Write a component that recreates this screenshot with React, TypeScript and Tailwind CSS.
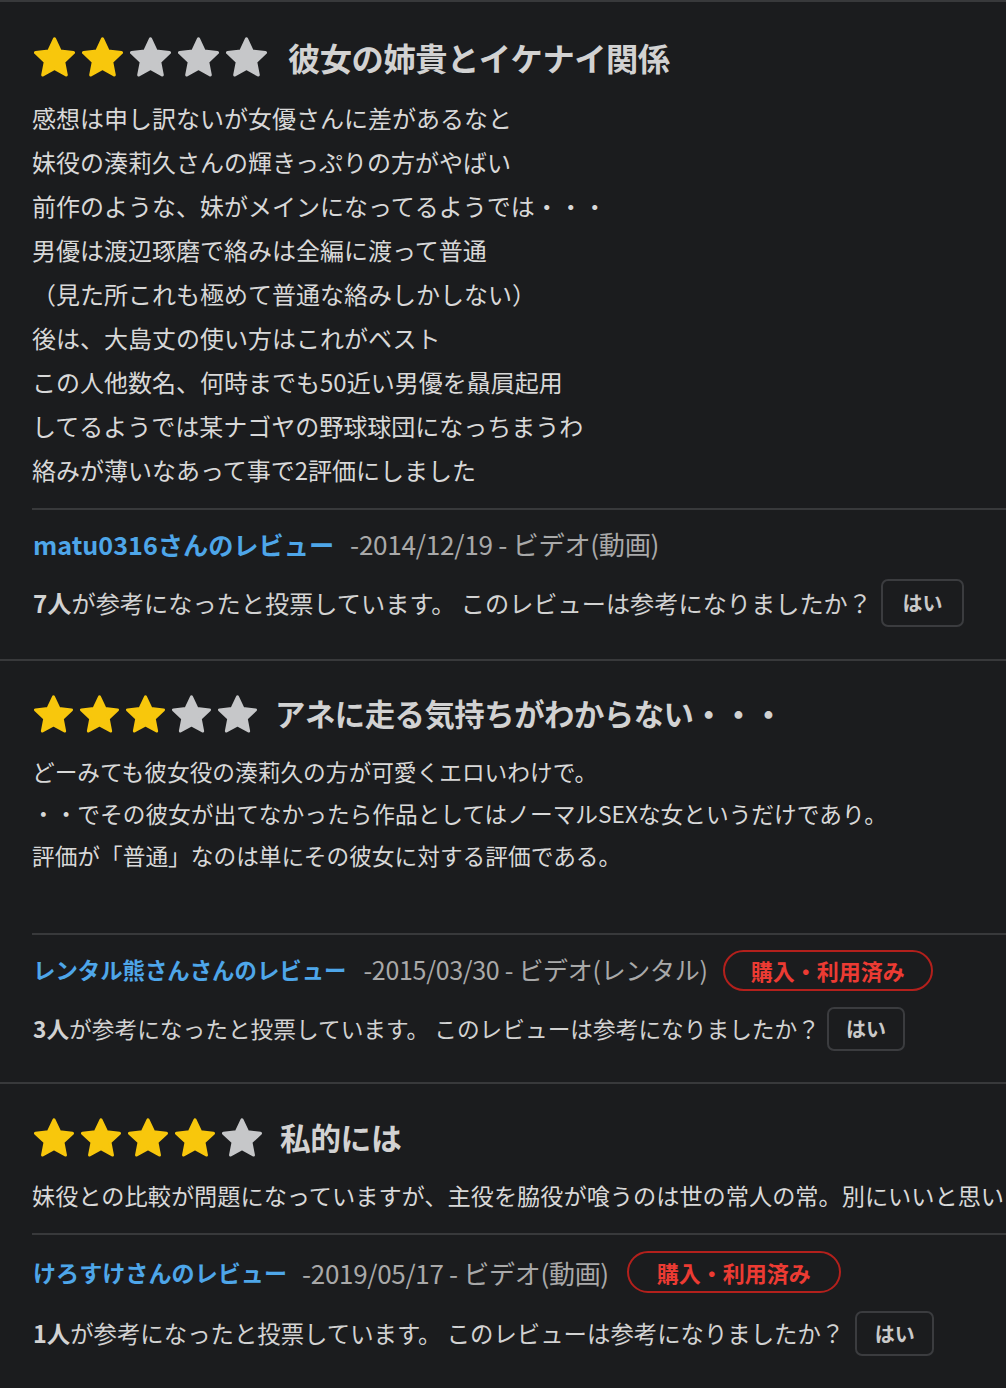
import React from 'react';

interface Sizes {
  pt: string;
  star: string;
  starGap: string;
  title: string;
  bodyMt: string;
  body: string;
  bodyMb: string;
  name: string;
  date: string;
  metaMt: string;
  metaH: string;
  badge: string;
  vote: string;
  voteMt: string;
  button: string;
  pb: string;
}

interface ReviewData {
  rating: number;
  title: string;
  lines: string[];
  reviewer: string;
  date: string;
  purchased?: boolean;
  votes: number;
  nowrap?: boolean;
  s: Sizes;
}

const Star: React.FC<{ filled: boolean; className: string }> = ({ filled, className }) => {
  const color = filled ? '#f8c70c' : '#c6c7c9';
  return (
    <svg viewBox="1.75 1.8 20.5 19.6" className={className}>
      <path
        d="M12 2.6l2.85 6.05 6.6.8-4.88 4.55 1.27 6.55L12 17.3l-5.84 3.25 1.27-6.55L2.55 9.45l6.6-.8z"
        fill={color}
        stroke={color}
        strokeWidth="1.6"
        strokeLinejoin="round"
      />
    </svg>
  );
};

const reviews: ReviewData[] = [
  {
    rating: 2,
    title: '彼女の姉貴とイケナイ関係',
    lines: [
      '感想は申し訳ないが女優さんに差があるなと',
      '妹役の湊莉久さんの輝きっぷりの方がやばい',
      '前作のような、妹がメインになってるようでは・・・',
      '男優は渡辺琢磨で絡みは全編に渡って普通',
      '（見た所これも極めて普通な絡みしかしない）',
      '後は、大島丈の使い方はこれがベスト',
      'この人他数名、何時までも50近い男優を贔屓起用',
      'してるようでは某ナゴヤの野球球団になっちまうわ',
      '絡みが薄いなあって事で2評価にしました',
    ],
    reviewer: 'matu0316さんのレビュー',
    date: '-2014/12/19 - ビデオ(動画)',
    votes: 7,
    s: {
      pt: 'pt-[31px]',
      star: 'w-[41px] h-[40px]',
      starGap: 'gap-[7px]',
      title: 'text-[32.3px] ml-[21px]',
      bodyMt: 'mt-[15px]',
      body: 'text-[24px] leading-[44px]',
      bodyMb: 'mb-[16px]',
      name: 'text-[25.2px]',
      date: 'text-[26.2px] ml-[16px]',
      metaMt: 'mt-[16px]',
      metaH: 'h-[36px]',
      badge: '',
      vote: 'text-[24.2px]',
      voteMt: 'mt-[17px]',
      button: 'w-[83px] h-[48px] ml-[9px]',
      pb: 'pb-[32px]',
    },
  },
  {
    rating: 3,
    title: 'アネに走る気持ちがわからない・・・',
    lines: [
      'どーみても彼女役の湊莉久の方が可愛くエロいわけで。',
      '・・でその彼女が出てなかったら作品としてはノーマルSEXな女というだけであり。',
      '評価が「普通」なのは単にその彼女に対する評価である。',
    ],
    reviewer: 'レンタル熊さんさんのレビュー',
    date: '-2015/03/30 - ビデオ(レンタル)',
    purchased: true,
    votes: 3,
    s: {
      pt: 'pt-[30px]',
      star: 'w-[39px] h-[38px]',
      starGap: 'gap-[7px]',
      title: 'text-[30.4px] ml-[18px]',
      bodyMt: 'mt-[14px]',
      body: 'text-[22.7px] leading-[42px]',
      bodyMb: 'mb-[56px]',
      name: 'text-[22.4px]',
      date: 'text-[25px] ml-[17px]',
      metaMt: 'mt-[14px]',
      metaH: 'h-[42px]',
      badge: 'h-[41px] px-[26px] text-[22px] ml-[15px]',
      vote: 'text-[22.7px]',
      voteMt: 'mt-[16px]',
      button: 'w-[78px] h-[44px] ml-[7px]',
      pb: 'pb-[31px]',
    },
  },
  {
    rating: 4,
    title: '私的には',
    lines: ['妹役との比較が問題になっていますが、主役を脇役が喰うのは世の常人の常。別にいいと思います。'],
    reviewer: 'けろすけさんのレビュー',
    date: '-2019/05/17 - ビデオ(動画)',
    purchased: true,
    votes: 1,
    nowrap: true,
    s: {
      pt: 'pt-[30px]',
      star: 'w-[40px] h-[39px]',
      starGap: 'gap-[7px]',
      title: 'text-[30.8px] ml-[18px]',
      bodyMt: 'mt-[14px]',
      body: 'text-[23.2px] leading-[42px]',
      bodyMb: 'mb-[17px]',
      name: 'text-[23.1px]',
      date: 'text-[26px] ml-[15px]',
      metaMt: 'mt-[16px]',
      metaH: 'h-[42px]',
      badge: 'h-[42px] px-[28px] text-[22px] ml-[18px]',
      vote: 'text-[23.4px]',
      voteMt: 'mt-[18px]',
      button: 'w-[79px] h-[45px] ml-[11px]',
      pb: 'pb-[32px]',
    },
  },
];

const Review: React.FC<{ r: ReviewData }> = ({ r }) => {
  const { s } = r;
  return (
    <section className={`border-t-2 border-[#38393b] ${s.pt} ${s.pb}`}>
      {/* Stars + title */}
      <div className="flex items-center pl-[34px]">
        <div className={`flex ${s.starGap}`}>
          {Array.from({ length: 5 }).map((_, i) => (
            <Star key={i} filled={i < r.rating} className={s.star} />
          ))}
        </div>
        <h2 className={`font-bold text-[#d2d2d2] tracking-[-0.5px] ${s.title}`}>{r.title}</h2>
      </div>

      {/* Body */}
      <div className={`pl-[32px] text-[#d8d8d8] ${s.bodyMt} ${s.bodyMb} ${s.body} ${r.nowrap ? 'whitespace-nowrap overflow-hidden' : ''}`}>
        {r.lines.map((line, i) => (
          <p key={i}>{line}</p>
        ))}
      </div>

      <div className="ml-[32px] border-t-2 border-[#38393b]" />

      {/* Reviewer row */}
      <div className={`flex items-center pl-[33px] ${s.metaMt} ${s.metaH}`}>
        <span className={`font-bold text-[#4ea6e9] ${s.name}`}>{r.reviewer}</span>
        <span className={`text-[#a9a9a9] tracking-[-0.3px] ${s.date}`}>{r.date}</span>
        {r.purchased && (
          <span
            className={`flex items-center rounded-full border-2 border-[#b3201c] font-bold text-[#ec3b33] ${s.badge}`}
          >
            購入・利用済み
          </span>
        )}
      </div>

      {/* Vote row */}
      <div className={`flex items-center pl-[33px] text-[#d2d2d2] ${s.voteMt} ${s.vote}`}>
        <span>
          <span className="font-bold">{r.votes}人</span>が参考になったと投票しています。 このレビューは参考になりましたか？
        </span>
        <button
          className={`flex items-center justify-center rounded-[7px] border-2 border-[#3b3c3f] bg-[#1b1c1e] text-[20px] font-bold text-[#c9c9c9] ${s.button}`}
        >
          はい
        </button>
      </div>
    </section>
  );
};

export default function App() {
  return (
    <div className="w-[1006px] h-[1388px] overflow-hidden bg-[#1b1c1e] font-['Noto_Sans_CJK_JP','Noto_Sans',sans-serif]">
      {reviews.map((r, i) => (
        <Review key={i} r={r} />
      ))}
    </div>
  );
}
